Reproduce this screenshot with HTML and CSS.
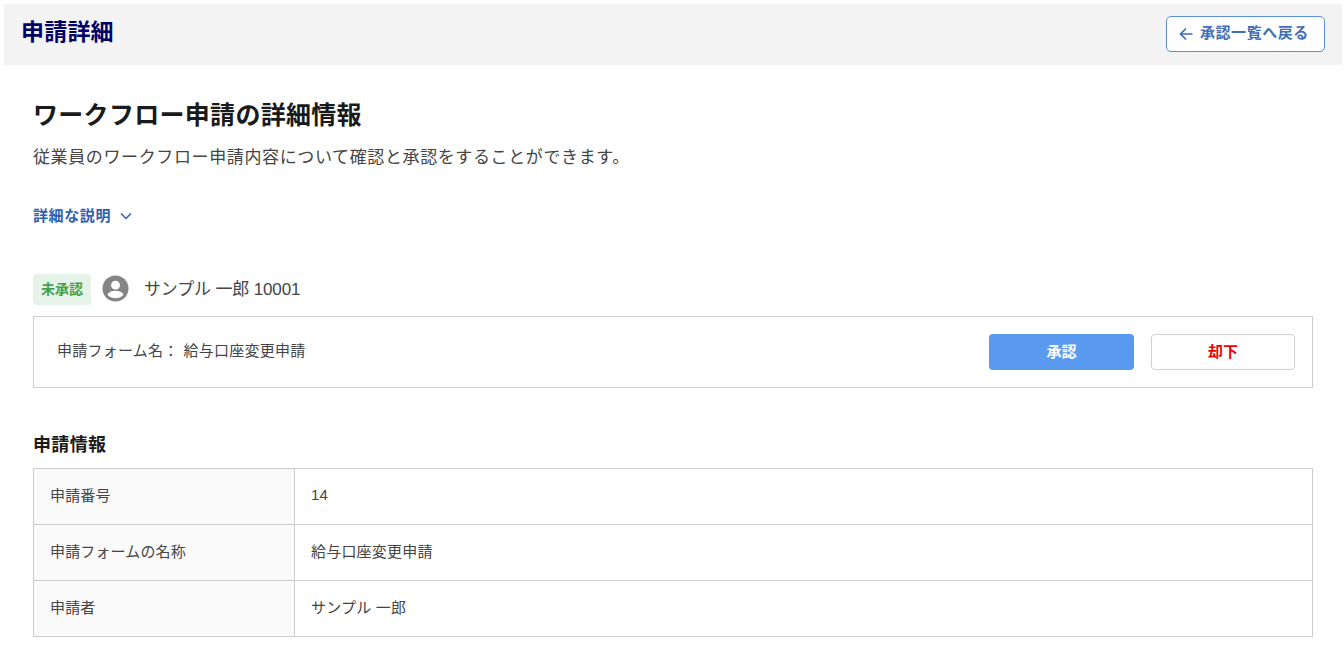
FILE: index.html
```html
<!DOCTYPE html>
<html lang="ja">
<head>
  <meta charset="UTF-8">
  <meta name="viewport" content="width=device-width, initial-scale=1.0">
  <title>申請詳細</title>
  <link rel="stylesheet" href="styles.css">
</head>
<body>
  <header class="page-header">
    <h1>申請詳細</h1>
    <a class="back-button" href="#">
      <svg width="16" height="16" viewBox="0 0 16 16" fill="none" stroke="currentColor" stroke-width="1.7">
        <path d="M14.5 8H2.5M8 2.5L2.5 8L8 13.5"/>
      </svg>
      <span>承認一覧へ戻る</span>
    </a>
  </header>

  <main class="content">
    <h2 class="page-title">ワークフロー申請の詳細情報</h2>
    <p class="lead">従業員のワークフロー申請内容について確認と承認をすることができます。</p>
    <a class="more-link" href="#">
      <span>詳細な説明</span>
      <svg width="14" height="14" viewBox="0 0 14 14" fill="none" stroke="currentColor" stroke-width="1.5">
        <path d="M2 4.5L7 9.5L12 4.5"/>
      </svg>
    </a>

    <div class="applicant">
      <span class="status-badge">未承認</span>
      <svg class="avatar" width="27" height="27" viewBox="0 0 28 28">
        <circle cx="14" cy="14" r="13.5" fill="#858585"/>
        <circle cx="14" cy="10.5" r="4.6" fill="#fff"/>
        <path d="M5.6 20.2C7.4 17.4 10.6 16.4 14 16.4S20.6 17.4 22.4 20.2C20.4 22.8 17.4 24.2 14 24.2S7.6 22.8 5.6 20.2Z" fill="#fff"/>
      </svg>
      <span class="applicant-name">サンプル 一郎 10001</span>
    </div>

    <div class="action-box">
      <p class="form-name"><span class="form-label">申請フォーム名：</span>給与口座変更申請</p>
      <div class="actions">
        <button class="btn btn-approve" type="button">承認</button>
        <button class="btn btn-reject" type="button">却下</button>
      </div>
    </div>

    <h3 class="section-title">申請情報</h3>
    <table class="info-table">
      <tr>
        <th>申請番号</th>
        <td>14</td>
      </tr>
      <tr>
        <th>申請フォームの名称</th>
        <td>給与口座変更申請</td>
      </tr>
      <tr>
        <th>申請者</th>
        <td>サンプル 一郎</td>
      </tr>
    </table>
  </main>
</body>
</html>
```

FILE: styles.css
```css
body {
  font-family: "Liberation Sans", Roboto, "Noto Sans CJK JP", sans-serif;
  background-color: #fff;
  color: #333;
  margin: 0;
  padding: 4px 2px 0 4px;
  overflow: hidden;
}

.page-header {
  display: flex;
  justify-content: space-between;
  align-items: center;
  height: 61px;
  padding: 0 17px;
  background-color: #f3f3f3;
  box-sizing: border-box;
}

.page-header h1 {
  margin: 0 0 9px;
  font-size: 23px;
  font-weight: 700;
  letter-spacing: 0.2px;
  color: #000066;
}

.back-button {
  display: flex;
  align-items: center;
  gap: 6px;
  box-sizing: border-box;
  width: 159px;
  height: 36px;
  padding-left: 11px;
  margin-top: -2px;
  background-color: #fff;
  border: 1px solid #5b8fd9;
  border-radius: 5px;
  color: #3f6fb8;
  font-size: 15px;
  line-height: 30px;
  font-weight: 700;
  letter-spacing: 0.55px;
  text-decoration: none;
}

.back-button span {
  margin-bottom: 2px;
}

.content {
  padding: 0 29px;
}

.page-title {
  margin: 32px 0 0;
  font-size: 25px;
  line-height: 36px;
  font-weight: 700;
  letter-spacing: 0.3px;
  color: #1a1a1a;
}

.lead {
  margin: 13px 0 0;
  font-size: 17px;
  line-height: 24px;
  letter-spacing: 0.62px;
  color: #444;
}

.more-link {
  display: flex;
  align-items: center;
  gap: 8px;
  margin-top: 36px;
  font-size: 15px;
  line-height: 20px;
  font-weight: 700;
  letter-spacing: 0.6px;
  color: #2f5fae;
  text-decoration: none;
}

.applicant {
  display: flex;
  align-items: center;
  margin-top: 48px;
}

.status-badge {
  width: 58px;
  height: 31px;
  line-height: 31px;
  text-align: center;
  background-color: #e6f3e8;
  border-radius: 4px;
  color: #43a04a;
  font-size: 14px;
  font-weight: 700;
}

.avatar {
  margin: 0 0 2px 11px;
}

.applicant-name {
  margin: 0 0 5px 15px;
  font-size: 17px;
  letter-spacing: -0.15px;
  color: #444;
}

.action-box {
  display: flex;
  justify-content: space-between;
  align-items: center;
  box-sizing: border-box;
  height: 72px;
  margin-top: 11px;
  padding: 0 17px 0 23px;
  border: 1px solid #ccc;
}

.form-name {
  margin: 0 0 5px;
  font-size: 15px;
  letter-spacing: 0.25px;
  color: #444;
}

.form-label {
  margin-right: 5px;
}

.actions {
  display: flex;
  gap: 17px;
}

.btn {
  height: 36px;
  border-radius: 4px;
  font-family: inherit;
  font-size: 15px;
  font-weight: 700;
  cursor: pointer;
}

.btn-approve {
  width: 145px;
  background-color: #5a99f0;
  border: none;
  color: #fff;
  padding-bottom: 5px;
}

.btn-reject {
  width: 144px;
  background-color: #fff;
  border: 1px solid #d0d0d0;
  color: #ee0000;
  padding-bottom: 5px;
}

.section-title {
  margin: 45px 0 0;
  font-size: 18px;
  line-height: 24px;
  font-weight: 700;
  letter-spacing: 0.35px;
  color: #1a1a1a;
}

.info-table {
  width: 100%;
  margin-top: 11px;
  border-collapse: collapse;
  font-size: 15px;
  letter-spacing: 0.15px;
  color: #444;
}

.info-table th,
.info-table td {
  height: 50px;
  padding: 0 16px 5px;
  border: 1px solid #ccc;
  text-align: left;
  font-weight: 400;
}

.info-table td {
  letter-spacing: 0.2px;
}

.info-table th {
  width: 228px;
  background-color: #fafafa;
}
```
